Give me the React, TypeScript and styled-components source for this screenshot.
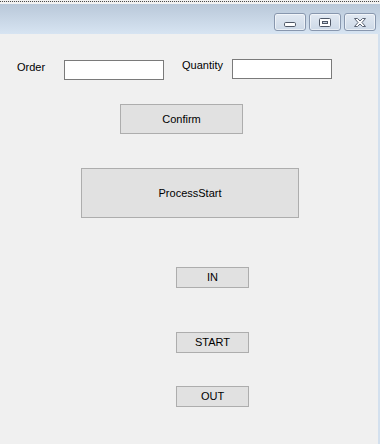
import React from "react";
import styled, { createGlobalStyle } from "styled-components";

const Global = createGlobalStyle`
  html, body { margin: 0; padding: 0; background: #f0f0f0; }
  body { font-family: "Liberation Sans", Arial, sans-serif; }
`;

const Window = styled.div`
  width: 380px;
  height: 444px;
  display: flex;
  flex-direction: column;
  overflow: hidden;
`;

const TitleBar = styled.div`
  height: 34px;
  flex: none;
  display: flex;
  flex-direction: column;
  background: linear-gradient(to bottom, #f2f2f2 0 4px, #b9c8d9 4px, #d7e4f2 100%);
`;

const DottedEdge = styled.div`
  height: 1px;
  margin-top: 1px;
  background: repeating-linear-gradient(90deg, #4a4a4a 0 1px, #e8e8e8 1px 2px);
`;

const Controls = styled.div`
  display: flex;
  justify-content: flex-end;
  gap: 3px;
  padding: 11px 4px 0 0;
`;

const CaptionButton = styled.div`
  width: 30px;
  height: 16px;
  border: 1px solid #8897ae;
  border-radius: 3px;
  background: linear-gradient(to bottom, #e2e9f2, #cdd9e7);
  box-shadow: inset 0 0 0 1px rgba(255, 255, 255, 0.55);
  display: flex;
  align-items: center;
  justify-content: center;
`;

const Client = styled.div`
  flex: 1;
  display: flex;
  flex-direction: column;
  background: #f0f0f0;
  border-right: 2px solid #d3e0ee;
`;

const FieldRow = styled.div`
  display: flex;
  align-items: flex-start;
  margin-top: 25px;
  padding-left: 17px;
`;

const Label = styled.span<{ $w: number; $mt: number; $ml?: number }>`
  width: ${(p) => p.$w}px;
  margin-top: ${(p) => p.$mt}px;
  margin-left: ${(p) => p.$ml ?? 0}px;
  font-size: 11px;
  line-height: 13px;
  color: #000;
`;

const TextBox = styled.input<{ $mt: number }>`
  box-sizing: border-box;
  width: 100px;
  height: 20px;
  margin: ${(p) => p.$mt}px 0 0 0;
  padding: 0 2px;
  border: 1px solid #7a7a7a;
  background: #fff;
  outline: none;
  font-family: "Liberation Sans", Arial, sans-serif;
  font-size: 11px;
`;

const Button = styled.button<{ $w: number; $h: number; $ml: number; $mt: number }>`
  box-sizing: border-box;
  width: ${(p) => p.$w}px;
  height: ${(p) => p.$h}px;
  margin: ${(p) => p.$mt}px 0 0 ${(p) => p.$ml}px;
  padding: 0;
  border: 1px solid #adadad;
  background: #e1e1e1;
  color: #000;
  font-family: "Liberation Sans", Arial, sans-serif;
  font-size: 11px;
  line-height: 13px;
  display: flex;
  align-items: center;
  justify-content: center;
  flex: none;
`;

const MinIcon = () => (
  <svg width="12" height="16" viewBox="0 0 12 16">
    <rect x="0.5" y="8.5" width="11" height="4" rx="1.2" fill="#fff" stroke="#4e5766" />
  </svg>
);

const RestoreIcon = () => (
  <svg width="12" height="16" viewBox="0 0 12 16">
    <rect x="0.5" y="4.5" width="11" height="8" rx="1" fill="#fff" stroke="#4e5766" />
    <rect x="3" y="7" width="6" height="3" fill="#4e5766" />
    <rect x="4" y="8" width="4" height="1" fill="#c8d2de" />
  </svg>
);

const CloseIcon = () => (
  <svg width="14" height="16" viewBox="0 0 14 16">
    <path
      d="M1.5 4.5 H4.5 L7 7 L9.5 4.5 H12.5 L9 8.5 L12.5 12.5 H9.5 L7 10 L4.5 12.5 H1.5 L5 8.5 Z"
      fill="#fff"
      stroke="#5a6373"
      strokeLinejoin="round"
    />
  </svg>
);

export default function App() {
  return (
    <>
      <Global />
      <Window>
        <TitleBar>
          <DottedEdge />
          <Controls>
            <CaptionButton>
              <MinIcon />
            </CaptionButton>
            <CaptionButton>
              <RestoreIcon />
            </CaptionButton>
            <CaptionButton>
              <CloseIcon />
            </CaptionButton>
          </Controls>
        </TitleBar>
        <Client>
          <FieldRow>
            <Label $w={47} $mt={2}>Order</Label>
            <TextBox $mt={1} />
            <Label $w={50} $mt={0} $ml={18}>Quantity</Label>
            <TextBox $mt={0} />
          </FieldRow>
          <Button $w={123} $h={30} $ml={120} $mt={24}>Confirm</Button>
          <Button $w={218} $h={50} $ml={81} $mt={34}>ProcessStart</Button>
          <Button $w={73} $h={21} $ml={176} $mt={49}>IN</Button>
          <Button $w={73} $h={21} $ml={176} $mt={44}>START</Button>
          <Button $w={73} $h={21} $ml={176} $mt={33}>OUT</Button>
        </Client>
      </Window>
    </>
  );
}
